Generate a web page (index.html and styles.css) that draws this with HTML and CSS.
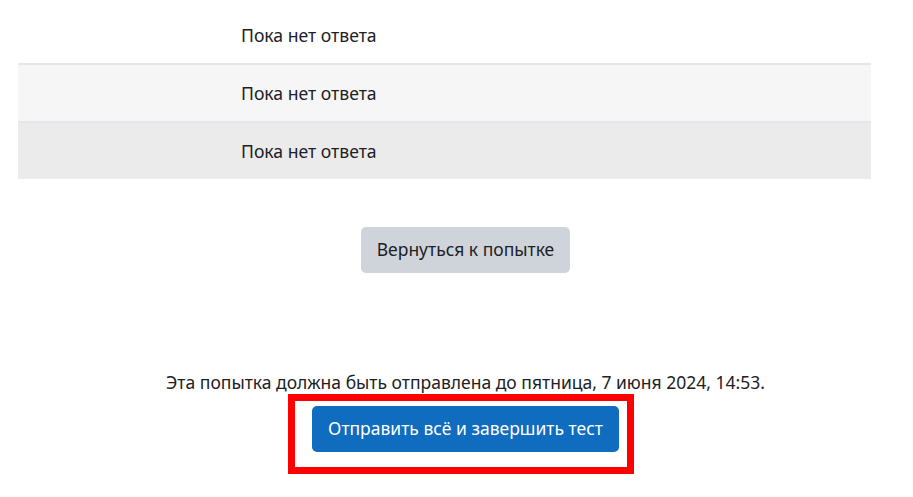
FILE: index.html
```html
<!DOCTYPE html>
<html lang="ru">
<head>
<meta charset="utf-8">
<link rel="stylesheet" href="styles.css">
</head>
<body>
<div class="page">
  <div class="summary">
    <div class="row first"><div class="num"></div><div class="status">Пока нет ответа</div></div>
    <div class="row striped"><div class="num"></div><div class="status">Пока нет ответа</div></div>
    <div class="row hover"><div class="num"></div><div class="status">Пока нет ответа</div></div>
  </div>
  <div class="return">
    <button class="btn btn-secondary">Вернуться к попытке</button>
  </div>
  <div class="submit">
    <p class="due">Эта попытка должна быть отправлена до пятница, 7 июня 2024, 14:53.</p>
    <button class="btn btn-primary">Отправить всё и завершить тест</button>
  </div>
</div>
<div class="highlight"></div>
</body>
</html>
```
FILE: styles.css
```css
html, body {
  margin: 0;
  padding: 0;
  background: #ffffff;
}
body {
  font-family: "Noto Sans", "Open Sans", sans-serif;
  color: #1d2125;
  font-size: 17.5px;
  position: relative;
  width: 913px;
  height: 497px;
  overflow: hidden;
}
.page {
  margin-left: 18px;
  padding-top: 7px;
  display: flex;
  flex-direction: column;
}
.summary {
  width: 853px;
  display: flex;
  flex-direction: column;
}
.row {
  display: grid;
  grid-template-columns: 223px 1fr;
  align-items: center;
  height: 58px;
  box-sizing: border-box;
  border-top: 2px solid #e5e6ea;
}
.row.first {
  height: 56px;
  border-top: none;
}
.row.striped {
  background: #f6f6f6;
}
.row.hover {
  background: #ebebeb;
}
.status {
  font-size: 17.6px;
}
.return {
  display: flex;
  justify-content: center;
  margin-top: 48px;
}
.btn {
  font-family: inherit;
  font-size: 17.5px;
  border: none;
  border-radius: 5px;
  height: 46px;
  padding: 0 16px;
  color: #1d2125;
  line-height: 1;
}
.btn-secondary {
  background: #ced4da;
}
.btn-primary {
  background: #0f6cbf;
  color: #ffffff;
}
.submit {
  margin-top: 99px;
  display: flex;
  flex-direction: column;
  align-items: center;
}
.due {
  margin: 0 0 14px;
  line-height: 20px;
}
.highlight {
  position: absolute;
  left: 288px;
  top: 394px;
  width: 346px;
  height: 80px;
  box-sizing: border-box;
  border: 7px solid #ff0000;
}
```
